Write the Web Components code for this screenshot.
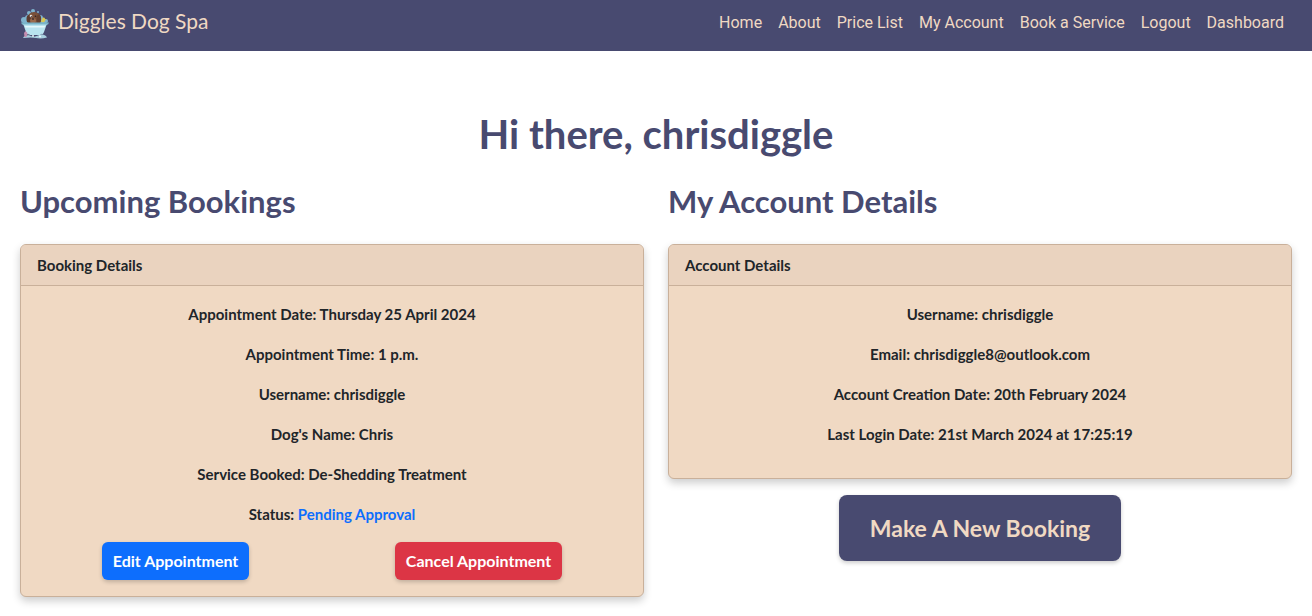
<!DOCTYPE html>
<html lang="en">
<head>
<meta charset="utf-8">
<meta name="viewport" content="width=device-width, initial-scale=1">
<title>Diggles Dog Spa</title>
<style>
  :root {
    --navy: #484a70;
    --sand: #f0d9c3;
    --ink: #212529;
    --line: #c9b09a;
  }
  body {
    margin: 0;
    background: #fff;
    color: var(--ink);
    font: 700 15px/24px Lato, "Liberation Sans", sans-serif;
  }
</style>
</head>
<body>
<spa-dashboard></spa-dashboard>

<template id="tpl-logo">
  <style>
    :host { display: block; width: 30px; height: 32px; }
    svg { display: block; width: 100%; height: 100%; }
  </style>
  <svg viewBox="0 0 30 32" aria-hidden="true">
    <g fill="#7fb3cd">
      <circle cx="13" cy="4" r="2"/><circle cx="9" cy="6" r="2"/><circle cx="18" cy="5" r="1"/>
      <circle cx="4" cy="13" r="3"/><circle cx="8" cy="11" r="3"/><circle cx="6" cy="15" r="3"/>
      <circle cx="20" cy="11" r="3"/><circle cx="23" cy="15" r="3"/><circle cx="26" cy="14" r="2"/>
    </g>
    <ellipse cx="14" cy="11" rx="6.500" ry="6" fill="#795039"/>
    <ellipse cx="8.800" cy="12" rx="2.300" ry="4" fill="#5b3b2f"/>
    <ellipse cx="18.800" cy="12" rx="2.300" ry="4.500" fill="#64402f"/>
    <ellipse cx="13" cy="13.500" rx="3" ry="2.500" fill="#9a6a4c"/>
    <circle cx="11" cy="9" r="1.300" fill="#f3ece6"/><circle cx="11.300" cy="9.300" r=".6" fill="#1d1b27"/>
    <circle cx="15.500" cy="9.300" r=".8" fill="#2a2029"/>
    <ellipse cx="13" cy="12" rx="1.200" ry=".8" fill="#2a2029"/>
    <path d="M22 11.500c1-1.500 3-1 3 .5l1.500.5-1.500 1c0 2-3 2.500-4 1z" fill="#d8c853"/>
    <path d="M2 16.500h26l-1.500 1.500-2.500 7q-1 3-4 3H10q-3 0-4-3L3.500 18z" fill="#b9e3ef"/>
    <path d="M1 15.500h28l-1 2H2z" fill="#79b5c9"/>
    <path d="M5 19h20l-.5 1.500H5.500z" fill="#e4f8fb"/>
    <path d="M9 27l-1 3M21 27l1 3" stroke="#68788f" stroke-width="1.300"/>
    <path d="M4 29.500q4-2 7-.5t7-.500 8 .5l1 1.500q-6 1.500-11 .5t-13 0z" fill="#a9cfdf"/>
    <path d="M5.500 24l2 2-1 4h-2l-.5-4z" fill="#c48daf"/>
    <circle cx="13" cy="29" r="1" fill="#e9f7fb"/><circle cx="20" cy="29.500" r="1" fill="#e9f7fb"/>
  </svg>
</template>

<template id="tpl-nav">
  <style>
    :host { display: block; background: var(--navy); font-weight: 400; color: var(--sand); }
    nav { display: flex; flex-wrap: wrap; align-items: flex-start; justify-content: space-between; padding: 3px 20px 8px; }
    a { color: inherit; text-decoration: none; }
    .brand { display: flex; align-items: flex-start; gap: 8px; font-size: 21px; line-height: 36px; }
    spa-logo { margin-top: 4px; }
    ul { display: flex; flex-wrap: wrap; margin: 0; padding: 0; list-style: none; font-family: Roboto, Lato, sans-serif; font-size: 16px; }
    li a { display: block; padding: 8px; }
  </style>
  <nav aria-label="Main">
    <a class="brand" href="#"><spa-logo></spa-logo><span>Diggles Dog Spa</span></a>
    <ul>
      <li><a href="#home">Home</a></li>
      <li><a href="#about">About</a></li>
      <li><a href="#prices">Price List</a></li>
      <li><a href="#account">My Account</a></li>
      <li><a href="#book">Book a Service</a></li>
      <li><a href="#logout">Logout</a></li>
      <li><a href="#dashboard">Dashboard</a></li>
    </ul>
  </nav>
</template>

<template id="tpl-card">
  <style>
    :host {
      display: block;
      background: var(--sand);
      border: 1px solid var(--line);
      border-radius: 6px;
      box-shadow: 0 4px 8px rgba(0, 0, 0, .2);
      overflow: hidden;
    }
    header { padding: 8px 16px; background: #ead3bf; border-bottom: 1px solid var(--line); }
    .body { padding: 16px; text-align: center; }
    ::slotted(p) { margin: 0 0 16px; }
  </style>
  <header><slot name="title"></slot></header>
  <div class="body"><slot></slot></div>
</template>

<template id="tpl-button">
  <style>
    :host { display: inline-block; }
    button {
      display: block;
      font: inherit;
      font-size: 16px;
      line-height: 24px;
      color: #fff;
      background: #0d6efd;
      border: 0;
      border-radius: 6px;
      padding: 7px 11px;
      box-shadow: 0 2px 4px rgba(0, 0, 0, .2);
      cursor: pointer;
    }
    :host([kind="danger"]) button { background: #dc3545; }
    :host([kind="large"]) button {
      color: var(--sand);
      background: var(--navy);
      font-size: 23px;
      line-height: 34px;
      padding: 16px 31px;
      border-radius: 8px;
    }
  </style>
  <button type="button"><slot></slot></button>
</template>

<template id="tpl-dashboard">
  <style>
    :host { display: block; }
    main { padding: 59px 20px 18px; }
    h1, h2 { margin: 0; color: var(--navy); font-weight: 700; }
    h1 { font-size: 40px; line-height: 48px; text-align: center; }
    h2 { font-size: 31px; line-height: 38px; margin-bottom: 24px; }
    .columns { display: grid; grid-template-columns: 1fr 1fr; gap: 24px; align-items: start; margin-top: 24px; }
    .actions { display: flex; justify-content: space-around; margin: 0 -8px; }
    .new { display: flex; justify-content: center; margin-top: 16px; }
    .status { color: #0d6efd; }
  </style>
  <spa-nav></spa-nav>
  <main>
    <h1>Hi there, chrisdiggle</h1>
    <div class="columns">
      <section>
        <h2>Upcoming Bookings</h2>
        <spa-card>
          <span slot="title">Booking Details</span>
          <p>Appointment Date: Thursday 25 April 2024</p>
          <p>Appointment Time: 1 p.m.</p>
          <p>Username: chrisdiggle</p>
          <p>Dog's Name: Chris</p>
          <p>Service Booked: De-Shedding Treatment</p>
          <p>Status: <span class="status">Pending Approval</span></p>
          <div class="actions">
            <spa-button>Edit Appointment</spa-button>
            <spa-button kind="danger">Cancel Appointment</spa-button>
          </div>
        </spa-card>
      </section>
      <section>
        <h2>My Account Details</h2>
        <spa-card>
          <span slot="title">Account Details</span>
          <p>Username: chrisdiggle</p>
          <p>Email: chrisdiggle8@outlook.com</p>
          <p>Account Creation Date: 20th February 2024</p>
          <p>Last Login Date: 21st March 2024 at 17:25:19</p>
        </spa-card>
        <div class="new"><spa-button kind="large">Make A New Booking</spa-button></div>
      </section>
    </div>
  </main>
</template>

<script>
  for (const name of ['logo', 'nav', 'card', 'button', 'dashboard']) {
    customElements.define('spa-' + name, class extends HTMLElement {
      constructor() {
        super();
        const template = document.getElementById('tpl-' + name);
        this.attachShadow({ mode: 'open' }).append(template.content.cloneNode(true));
      }
    });
  }
</script>
</body>
</html>
